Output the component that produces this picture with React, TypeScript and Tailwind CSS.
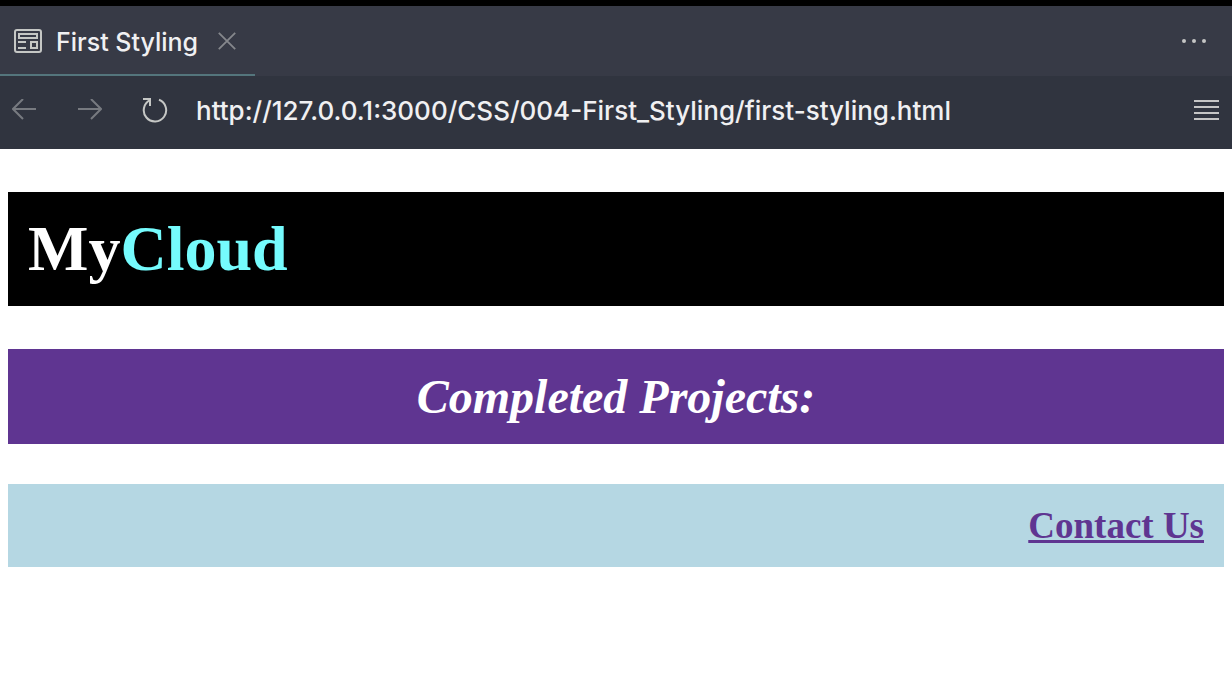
import type { ReactNode } from "react";

type IconButtonProps = {
  label: string;
  className?: string;
  children: ReactNode;
};

function IconButton({ label, className = "", children }: IconButtonProps) {
  return (
    <button type="button" aria-label={label} className={`flex shrink-0 items-center justify-center ${className}`}>
      {children}
    </button>
  );
}

function PreviewIcon() {
  return (
    <svg width="28" height="24" viewBox="0 0 28 24" fill="none" stroke="currentColor" strokeWidth="2" aria-hidden="true">
      <rect x="1" y="1" width="26" height="22" rx="2" />
      <rect x="5" y="5" width="18" height="4" />
      <path d="M4 13h8M4 19h8" />
      <rect x="17" y="13" width="6" height="6" />
    </svg>
  );
}

function CloseIcon() {
  return (
    <svg width="18" height="18" viewBox="0 0 18 18" fill="none" stroke="currentColor" strokeWidth="1.8" aria-hidden="true">
      <path d="M0.8 0.8l16.4 16.4M17.2 0.8L0.8 17.2" />
    </svg>
  );
}

function ArrowIcon({ direction }: { direction: "left" | "right" }) {
  return (
    <svg width="24" height="22" viewBox="0 0 24 22" fill="none" stroke="currentColor" strokeWidth="2" aria-hidden="true">
      <path d={direction === "left" ? "M24 10H1M11 0L1 10l10 10" : "M0 10h23M13 0l10 10-10 10"} />
    </svg>
  );
}

function ReloadIcon() {
  return (
    <svg width="26" height="26" viewBox="0 0 26 26" fill="none" stroke="currentColor" strokeWidth="2" aria-hidden="true">
      <path d="M1 2h7v7" />
      <path d="M8 3.2A11.2 11.2 0 1 0 17 2.8" />
    </svg>
  );
}

function TabBar() {
  return (
    <header className="flex h-[70px] items-stretch justify-between bg-[#373a46]">
      <div className="flex w-[255px] items-center border-b-2 border-[#54757c] pl-3.5 pt-0.5 text-[#c5c7c5]">
        <PreviewIcon />
        <span className="ml-3.5 pt-0.5 text-[25px] font-medium leading-8 text-[#f0f0f2]">First Styling</span>
        <IconButton label="Close tab" className="ml-5 text-[#85878c]">
          <CloseIcon />
        </IconButton>
      </div>
      <IconButton label="More actions" className="mr-[26px] text-[#c5c5c5]">
        <svg width="24" height="4" viewBox="0 0 24 4" fill="currentColor" aria-hidden="true">
          <circle cx="2" cy="2" r="2" />
          <circle cx="12" cy="2" r="2" />
          <circle cx="22" cy="2" r="2" />
        </svg>
      </IconButton>
    </header>
  );
}

function AddressBar() {
  return (
    <nav className="flex h-[73px] items-center bg-[#30343f] pb-[5px] pl-3 pr-[13px] text-[#c5c7c5]">
      <IconButton label="Back" className="text-[#777a80]">
        <ArrowIcon direction="left" />
      </IconButton>
      <IconButton label="Forward" className="ml-[42px] text-[#777a80]">
        <ArrowIcon direction="right" />
      </IconButton>
      <IconButton label="Reload" className="ml-10">
        <ReloadIcon />
      </IconButton>
      <input
        type="text"
        aria-label="Address"
        defaultValue="http://127.0.0.1:3000/CSS/004-First_Styling/first-styling.html"
        className="ml-7 h-9 min-w-0 flex-1 bg-transparent text-[26px] font-medium text-[#f0f0f2] outline-none"
      />
      <IconButton label="Menu" className="ml-4 text-[#c5c5c5]">
        <svg width="25" height="20" viewBox="0 0 25 20" stroke="currentColor" strokeWidth="2" aria-hidden="true">
          <path d="M0 1h25M0 7h25M0 13h25M0 19h25" />
        </svg>
      </IconButton>
    </nav>
  );
}

export default function App() {
  return (
    <div className="min-h-screen bg-white">
      <div className="border-t-[6px] border-black font-['Inter',sans-serif]">
        <TabBar />
        <AddressBar />
      </div>
      <main className="px-2 pt-[43px] font-['Liberation_Serif',serif] font-bold">
        <h1 className="bg-black p-5 text-[64px] leading-[74px] text-white">
          My<span className="text-[#75fbfd]">Cloud</span>
        </h1>
        <h2 className="mt-[43px] bg-[#5f3591] p-5 text-center text-[48px] italic leading-[55px] text-white">
          Completed Projects:
        </h2>
        <h3 className="mt-10 bg-[#b5d7e3] p-5 text-right text-[37px] leading-[43px]">
          <a href="#contact" className="text-[#5f3591] underline decoration-[3px]">
            Contact Us
          </a>
        </h3>
      </main>
    </div>
  );
}
